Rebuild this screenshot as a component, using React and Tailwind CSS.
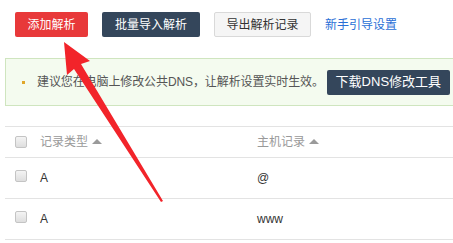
import React from 'react';

const font = { fontFamily: '"Liberation Sans", "Noto Sans CJK SC", sans-serif' };

const Checkbox = () => (
  <span className="inline-block w-[12px] h-[12px] rounded-[2px] border border-[#c4c4c4] bg-gradient-to-b from-[#f4f4f4] to-[#dedede]" />
);

const SortUp = () => (
  <span className="inline-block ml-[4px] w-0 h-0 border-l-[5px] border-r-[5px] border-b-[5px] border-l-transparent border-r-transparent border-b-[#9a9a9a] align-middle mb-[2px]" />
);

const rows = [
  { type: 'A', host: '@' },
  { type: 'A', host: 'www' },
];

const App = () => {
  return (
    <div className="relative w-[453px] h-[243px] bg-white overflow-hidden text-[12px]" style={font}>
      <div className="flex items-center gap-[14px] pl-[15px] pt-[12px]">
        <button className="h-[25px] w-[73px] rounded-[2px] bg-[#e8393a] text-white text-[12px]">添加解析</button>
        <button className="h-[25px] w-[98px] rounded-[2px] bg-[#34465b] text-white text-[12px]">批量导入解析</button>
        <button className="h-[25px] w-[97px] rounded-[2px] bg-[#f5f5f5] border border-[#d9d9d9] text-[#333] text-[12px]">导出解析记录</button>
        <a className="text-[#2a6fd6] text-[12px]">新手引导设置</a>
      </div>

      <div className="ml-[5px] mt-[21px] w-[470px] h-[48px] border border-[#cfe5bf] bg-[#f4fbef] flex items-center">
        <span className="ml-[16px] w-[3px] h-[3px] bg-[#e0a72a]" />
        <span className="ml-[12px] text-[#555] tracking-[-0.1px]">建议您在电脑上修改公共DNS，让解析设置实时生效。</span>
        <button className="ml-[3px] h-[25px] w-[123px] rounded-[2px] bg-[#34465b] text-white text-[13px]">下载DNS修改工具</button>
      </div>

      <div className="ml-[5px] mt-[20px] w-[470px] border-t border-[#e3e3e3]">
        <div className="flex items-center h-[31px] border-b border-[#e3e3e3] text-[#999]">
          <div className="w-[35px] pl-[10px] flex items-center"><Checkbox /></div>
          <div className="w-[217px] flex items-center">记录类型<SortUp /></div>
          <div className="flex items-center">主机记录<SortUp /></div>
        </div>
        {rows.map((r, i) => (
          <div key={i} className="flex items-center h-[41px] border-b border-[#e3e3e3] text-[#333]">
            <div className="w-[35px] pl-[10px] flex items-center -mt-[4px]"><Checkbox /></div>
            <div className="w-[217px]">{r.type}</div>
            <div>{r.host}</div>
          </div>
        ))}
      </div>

      <svg className="absolute left-0 top-0 pointer-events-none" width="453" height="243">
        <polygon points="64,42 90,61 81,64 163,201 161,202 74,69 67,75" fill="#f2242a" />
      </svg>
    </div>
  );
};

export default App;
